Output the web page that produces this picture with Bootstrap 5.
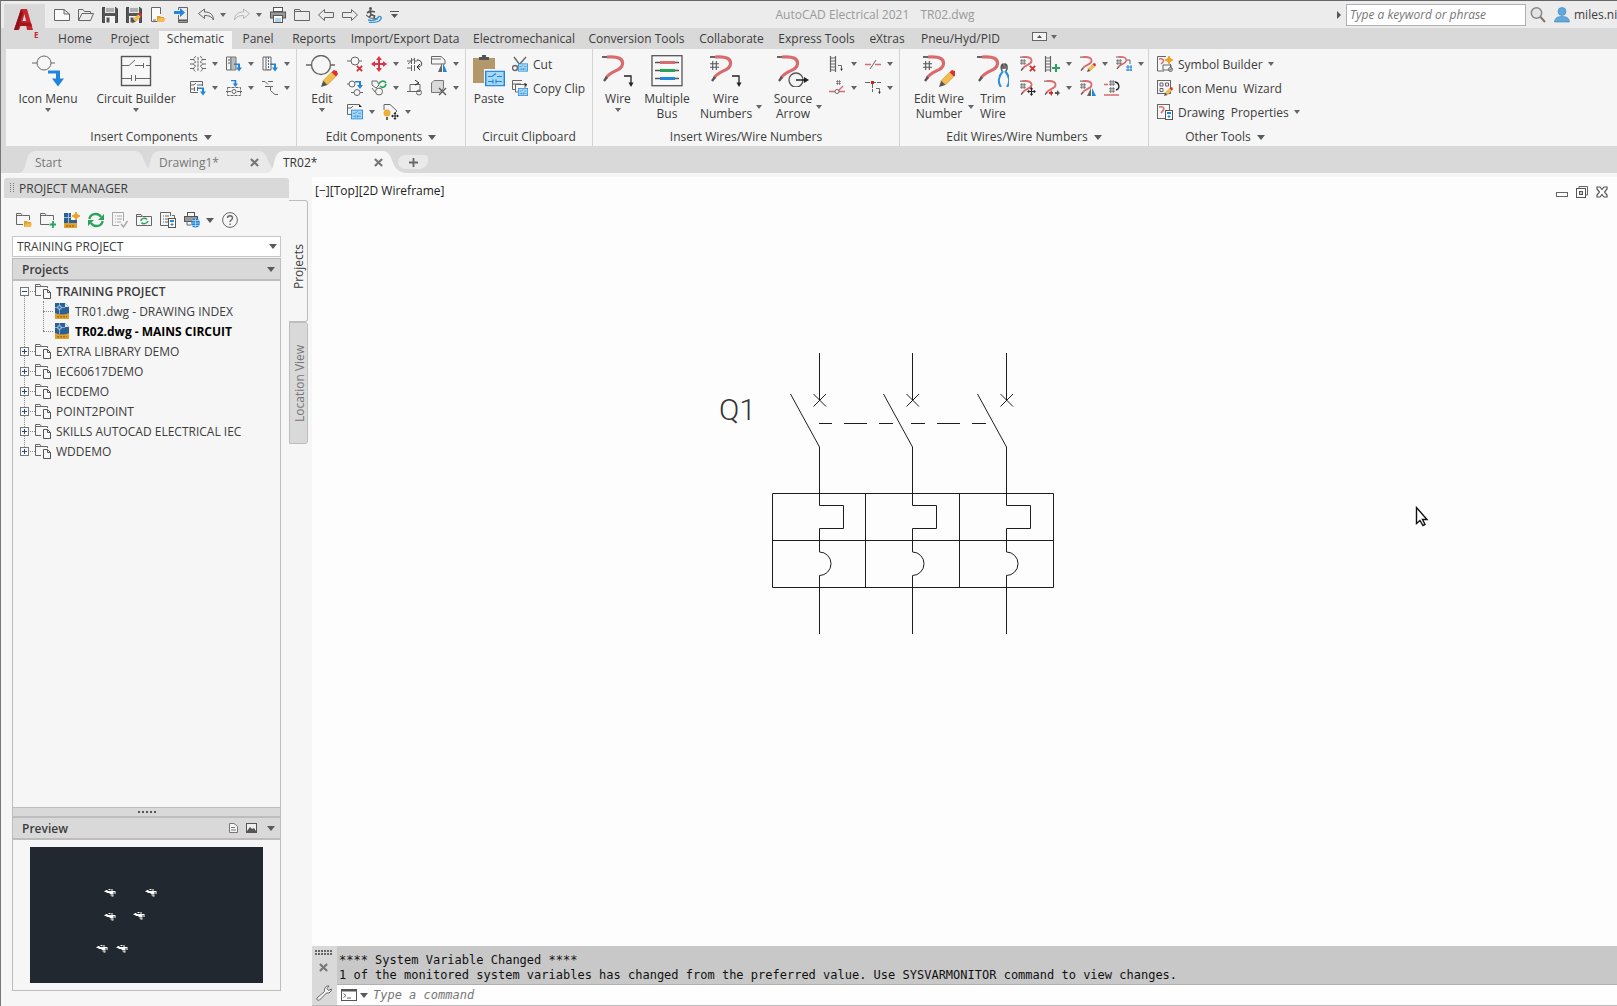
<!DOCTYPE html>
<html lang="en">
<head>
<meta charset="utf-8">
<meta name="viewport" content="width=device-width, initial-scale=1">
<title>AutoCAD Electrical 2021 - TR02.dwg</title>
<link href="https://cdn.jsdelivr.net/npm/bootstrap@5.3.0/dist/css/bootstrap.min.css" rel="stylesheet">
<style>
:root{--chrome:#d9d9d9;--panel:#f6f6f6;--edge:#bdbdbd;--ink:#444}
body{font-family:"Open Sans","Noto Sans",sans-serif;font-size:12px;line-height:15px;color:#3c3c3c;background:var(--panel)}
button{font:inherit;color:inherit;background:none;border:0;padding:0}
a{color:inherit;text-decoration:none}
svg{display:block;flex:none}
.app{border-top:1px solid #666;border-left:1px solid #777}
.i16{width:16px;height:16px}
.i32{width:32px;height:32px}
.ln{fill:none;stroke:#666}
.ln2{fill:none;stroke:#666;stroke-width:1.4}
.caret-s,.caret-m{width:0;height:0;border:3px solid transparent;border-top:4px solid #666;border-bottom:0;flex:none}
.caret-m{border-width:5px 4px 0;border-top-color:#5a5a5a}
/* title bar */
.titlebar{height:27px;background:#ececec}
.logo-btn{width:41px;height:43px;left:3px;top:3px;background:var(--chrome);z-index:3}
.qat{padding-left:53px}
.qat button{width:24px;height:24px;display:flex;align-items:center}
.qat .with-c{width:20px}
.qat .split-c{width:16px;padding-left:2px}
.doc-title{color:#999}
.search-in{width:180px;height:22px;border:1px solid #b0b0b0;background:#fff;font-style:italic;padding:0 3px;color:#666}
.search-in::placeholder,.cmd-in::placeholder{color:#777;opacity:1}
.user{width:63px}
/* ribbon tabs */
.rtabs{height:21px;background:var(--chrome);padding-left:48px}
.rtabs .nav-link{height:18px;padding:0 0 4px;display:flex;align-items:center;justify-content:center;border-radius:0;color:#3c3c3c;white-space:nowrap}
.rtabs .nav-link.active{background:var(--panel);color:#3c3c3c}
.t-52{width:52px}.t-58{width:58px}.t-60{width:60px}.t-73{width:73px}.t-81{width:81px}.t-89{width:89px}.t-95{width:95px}.t-109{width:109px}.t-116{width:116px}.t-122{width:122px}
/* ribbon */
.ribbon{height:97px;background:var(--panel);border-left:5px solid var(--chrome)}
.rpanel{border-right:1px solid #d4d4d4;display:flex;flex-direction:column;flex:none}
.rpanel:last-child{border:0}
.rbody{display:flex;height:79px;padding-top:3px}
.rtitle{height:18px;line-height:18px;display:flex;justify-content:center;align-items:center;gap:6px;white-space:nowrap}
.w-ins{width:291px}.w-edit{width:169px}.w-clip{width:127px}.w-wire{width:307px}.w-ewire{width:249px}.w-oth{width:152px}
.big{display:flex;flex-direction:column;align-items:center;flex:none;white-space:nowrap;padding-top:3px}
.big .lbl{margin-top:4px;line-height:15px;text-align:center;display:flex;align-items:center;gap:4px}
.big .caret-s{margin-top:2px}
.big .lbl .caret-s{margin:2px -10px 0 0}
.b42{width:42px}.b46{width:46px}.b48{width:48px}.b50{width:50px}.b62{width:62px}.b64{width:64px}.b84{width:84px}.b92{width:92px}
.smalls{display:flex;flex-direction:column}
.smalls>div{display:flex;height:24px}
.sm{width:24px;height:24px;display:flex;align-items:center}
.smc{width:36px;gap:6px}
.row-btn{height:24px;display:flex;align-items:center;gap:5px;white-space:pre}
/* file tabs */
.ftabs{height:27px;background:var(--chrome);padding:5px 0 0 17px}
.ftab{position:relative;width:123px;height:22px;margin-right:1px;padding:1px 11px 0 17px;color:#777;z-index:1;flex:none}
.ftab::before{content:"";position:absolute;left:0;top:0;width:142px;height:22px;background:#e9e9e9;clip-path:path('M0 22 C12 22 4 0 18 0 H116 C130 0 122 22 142 22 Z');z-index:-1}
.ftab.on{z-index:2;color:#333}
.ftab.on::before{background:var(--panel)}
.ftab svg{margin-right:-5px}
.plus{width:30px;height:14px;background:#e9e9e9;border-radius:8px 4px 10px 8px;margin:4px 0 0 8px;display:flex;align-items:center;justify-content:center}
/* palette */
.side{width:311px;padding:5px 4px 0 3px}
.pal{width:285px}
.pal-head{height:20px;background:var(--chrome);padding-left:6px;gap:5px;border-radius:3px 3px 0 0;margin-bottom:9px}
.pal-tools{height:26px;padding-left:12px;margin-bottom:3px}
.pal-tools button{width:24px;height:24px;display:flex;align-items:center}
.pal-tools .with-c{width:22px}
.pal-in{margin:0 8px 15px 8px}
.proj-pick{padding-bottom:1px}
.proj-sel{height:21px;border:1px solid #c6c6c6;border-radius:0;background:#fff;font-size:12px;line-height:15px;padding:0 4px;color:#3c3c3c;appearance:none;width:100%}
.sec{height:23px;background:var(--chrome);border:1px solid var(--edge);border-bottom:2px solid var(--edge);padding:0 5px 0 9px;font-weight:600}
.sec-mid{margin:0 10px 0 8px}
.tree{border:1px solid var(--edge);border-top:0}
.tree ul{list-style:none;margin:0;padding:0}
.tnode{height:20px;display:flex;align-items:center;padding-left:7px;white-space:nowrap}
.tnode .exp{width:9px;height:9px;margin-right:6px}
.tnode .i16{margin-right:5px}
.tsub .tnode{padding-left:41px}
.tsub{position:relative}
.tsub::before{content:"";position:absolute;left:30px;top:0;height:30px;border-left:1px dotted #888}
.tsub .tnode::before{content:"";position:absolute;left:30px;width:10px;border-top:1px dotted #888}
.troot{position:relative}
.troot::before{content:"";position:absolute;left:11px;top:14px;bottom:10px;border-left:1px dotted #888}
.troot>li>.tnode{position:relative}
.troot>li>.tnode::after{content:"";position:absolute;left:17px;top:10px;width:5px;border-top:1px dotted #888}
.split{height:9px;background:var(--chrome);border:1px solid var(--edge);border-top:0}
.prev-box{border:1px solid var(--edge);border-top:0;padding:7px 17px}
.prev-img{height:136px;background:#222830;width:100%}
.vtabs{padding-top:22px}
.vtab{width:19px;height:122px;writing-mode:vertical-rl;transform:rotate(180deg);border:1px solid var(--edge);text-align:center;line-height:19px;border-radius:3px 0 0 3px}
.vtab.on{border-right:0;border-bottom:1px solid var(--edge);background:var(--panel);padding-bottom:12px}
.vtab.off{background:var(--chrome);color:#777}
/* drawing */
.canvas{background:#fdfdfd;margin-top:4px}
.vp{left:3px;top:6px;color:#222}
.wctl{right:9px;top:9px;gap:8px}
.schem{width:100%;height:100%;position:absolute;left:0;top:0}
.schem .wire{fill:none;stroke:#1e1e1e;stroke-width:1}
/* command line */
.cmd{border-bottom:1px solid #bbb;height:60px}
.cmd-strip{width:23px;margin-right:2px;padding-top:4px}
.cmd-side{background:var(--chrome)}
.mono{font-family:"DejaVu Sans Mono","Liberation Mono",monospace;font-size:12px}
.hist{background:#c8c8c8;height:39px;border-bottom:1px solid #b0b0b0;padding:7px 2px 0;color:#111;white-space:pre;line-height:15px;overflow:hidden}
.cmd-line{background:#fefefe;height:20px;padding-left:4px;gap:3px}
.cmd-in{border:0;outline:0;background:none;font-style:italic;padding:0;margin-left:2px;flex:1}
</style>
</head>
<body>
<!-- shared icon shapes -->
<svg width="0" height="0" class="position-absolute" aria-hidden="true">
<defs>
<symbol id="pencil" viewBox="0 0 16 16"><path d="M2 10 10 2 14 6 6 14Z" fill="#f2bd4e" stroke="#c98f28" stroke-width=".6"/><path d="M10 2 12 0 15 1 16 4 14 6Z" fill="#d9303a"/><path d="M2 10 0 16 6 14Z" fill="#555"/></symbol>
<symbol id="wirered" viewBox="0 0 32 32"><path d="M0 2H9" stroke="#666" stroke-width="2"/><path d="M5 2C17 1 21 4 20.500 9 20 16 9 15 4 23" fill="none" stroke="#d96b6f" stroke-width="3.200"/><path d="M5 22 2 26" stroke="#555" stroke-width="2.400"/></symbol>
<symbol id="hash" viewBox="0 0 10 10"><path d="M3 0V10M7 0V10M0 3H10M0 7H10" fill="none" stroke="#555" stroke-width="1.200"/></symbol>
<symbol id="bluedn" viewBox="0 0 16 16"><path d="M0 0H12V8H16L10 16 4 8H8V3H0Z" fill="#1f86dc"/></symbol>
<symbol id="bend" viewBox="0 0 10 12"><path d="M0 1H7V9" fill="none" stroke="#222" stroke-width="1.300"/><path d="M4.500 7.500H9.500L7 12Z" fill="#222"/></symbol>
<symbol id="redx" viewBox="0 0 8 8"><path d="M1 1 7 7M7 1 1 7" stroke="#d32f2f" stroke-width="2"/></symbol>
<symbol id="move" viewBox="0 0 16 16"><path d="M8 2V14M2 8H14" stroke="currentColor" stroke-width="2"/><path d="M8 0 11 4H5ZM8 16 11 12H5ZM0 8 4 5V11ZM16 8 12 5V11Z" fill="currentColor"/></symbol>
<symbol id="bluebox" viewBox="0 0 20 16"><rect x=".7" y=".7" width="18.600" height="14.600" fill="#a9d8f5" stroke="#1f86dc" stroke-width="1.400"/><path d="M3 6H7L11 3M12 6H17M3 11H8M8 9V13M11 9V13M11 11H17" stroke="#1f86dc" fill="none" stroke-width="1.200"/></symbol>
<symbol id="ladder" viewBox="0 0 8 16"><path d="M1.500 0V16M6.500 0V16M1.500 2H6.500M1.500 5H6.500M1.500 8H6.500M1.500 11H6.500M1.500 14H6.500" fill="none" stroke="#666" stroke-width="1.200"/></symbol>
<symbol id="star" viewBox="0 0 8 8"><path d="M4 0 5 2.500 8 4 5 5.500 4 8 3 5.500 0 4 3 2.500Z" fill="#f0a020" stroke="#f0a020"/></symbol>
<symbol id="projf" viewBox="0 0 16 16"><path d="M6 12.500H.5V1.500H5L6.500 3.500H12.500V5M.5 3.500H6.500" class="ln"/><path d="M8.500 6.500H12.500L15.500 9.500V15.500H8.500ZM12.500 6.500V9.500H15.500" fill="#fafafa" stroke="#555"/></symbol>
<symbol id="dwg" viewBox="0 0 16 16"><path d="M1 0H11L15 4V13H1Z" fill="#2b6094"/><path d="M11 0V4H15Z" fill="#dfe8f0"/><path d="M5.500 0V11M1 4.500H11" stroke="#9cc4e2" stroke-width=".8"/><rect x="4" y="3" width="3" height="3" fill="#2b6094" stroke="#cfe2f1" stroke-width=".7"/><path d="M1 10Q8 13 15 10V16H1Z" fill="#e0a030"/><path d="M3 13.800H13" stroke="#a87010" stroke-width="1.600" stroke-dasharray="2 1"/></symbol>
<symbol id="plusb" viewBox="0 0 9 9"><rect x=".5" y=".5" width="8" height="8" fill="#fafafa" stroke="#777"/><path d="M2 4.500H7M4.500 2V7" stroke="#224a80"/></symbol>
<symbol id="minusb" viewBox="0 0 9 9"><rect x=".5" y=".5" width="8" height="8" fill="#fafafa" stroke="#777"/><path d="M2 4.500H7" stroke="#224a80"/></symbol>
<symbol id="floppy" viewBox="0 0 16 16"><path d="M.5.5H14L15.500 2V15.500H.5Z" fill="#555" stroke="#444"/><rect x="3" y="0" width="10" height="6" fill="#e8e8e8"/><path d="M4 2H12M4 4H12" stroke="#777"/><rect x="3" y="9" width="10" height="7" fill="#f4f4f4"/><rect x="4.500" y="10.500" width="3" height="5" fill="#555"/></symbol>
<symbol id="xclose" viewBox="0 0 8 8"><path d="M.8.8 7.200 7.200M7.200.8.8 7.200" stroke="#777" stroke-width="1.900"/></symbol>
<symbol id="calc" viewBox="0 0 8 10"><rect x=".5" y=".5" width="7" height="9" fill="#fff" stroke="#555"/><rect x="2" y="2" width="4" height="2" fill="#1f86dc"/><path d="M4 5V8M2.500 6.500H5.500" stroke="#1f86dc"/></symbol>
</defs>
</svg>

<div class="app vh-100 d-flex flex-column overflow-hidden position-relative">
<button class="logo-btn position-absolute" aria-label="Application menu">
<svg width="41" height="43" viewBox="0 0 41 43"><path d="M10 26 17 5H23L29 26H23L22 21H17L15 26Z" fill="#c8252d"/><path d="M18.500 17 20.500 10 22 17Z" fill="#d9d9d9"/><path d="M10 26 17 5 19 9 14 26Z" fill="#8d1219"/><path d="M15 18 27 19 28 22H15Z" fill="#a3151d"/><text x="30" y="34" font-size="8" font-weight="700" fill="#c8252d" font-family="Open Sans,sans-serif">E</text></svg>
</button>

<header class="titlebar d-flex align-items-center flex-shrink-0">
<div class="qat d-flex">
<button aria-label="New"><svg class="i16" viewBox="0 0 16 16"><path d="M.5 2.500H10L15.500 7V13.500H.5ZM10 2.500V7H15.500" fill="#fafafa" stroke="#666"/></svg></button>
<button aria-label="Open"><svg class="i16" viewBox="0 0 16 16"><path d="M.5 13.500V2.500H5L6.500 4.500H12.500V6.500M.5 13.500 4 6.500H15.500L12.500 13.500Z" class="ln"/></svg></button>
<button aria-label="Save"><svg class="i16"><use href="#floppy"/></svg></button>
<button aria-label="Save as"><svg class="i16" viewBox="0 0 16 16"><use href="#floppy"/><use href="#pencil" x="6" y="6" width="10" height="10"/></svg></button>
<button aria-label="Open from mobile"><svg class="i16" viewBox="0 0 16 16"><path d="M8 14.500H1.500V.5H10.500V7" fill="#fafafa" stroke="#666"/><path d="M3 13H6" stroke="#666"/><path d="M7 9H10L11 10H14V15H7Z" fill="#e0a030"/><path d="M7 15 9 11H15.500L14 15Z" fill="#f3bb50"/></svg></button>
<button aria-label="Save to mobile"><svg class="i16" viewBox="0 0 16 16"><path d="M4.500 3V.5H13.500V15.500H4.500V8" class="ln"/><path d="M5 13.500H13" stroke="#555" stroke-width="2"/><path d="M0 4H6V1L11 5.500 6 10V7H0Z" fill="#1f86dc"/></svg></button>
<button class="with-c" aria-label="Undo"><svg class="i16" viewBox="0 0 16 16"><path d="M.5 6.500 6.500 2V5C12 5 15 7 15.500 13 13.500 9.500 11 8.500 6.500 8.500V11.500Z" class="ln"/></svg></button>
<button class="split-c" aria-label="Undo list"><span class="caret-s"></span></button>
<button class="with-c" aria-label="Redo"><svg class="i16" viewBox="0 0 16 16" opacity=".4"><path d="M15.500 6.500 9.500 2V5C4 5 1 7 .5 13 2.500 9.500 5 8.500 9.500 8.500V11.500Z" class="ln"/></svg></button>
<button class="split-c" aria-label="Redo list"><span class="caret-s"></span></button>
<button aria-label="Plot"><svg class="i16" viewBox="0 0 16 16"><rect x="3.500" y=".5" width="9" height="4" fill="#fff" stroke="#555"/><rect x=".5" y="5" width="15" height="6" fill="#999" stroke="#555"/><rect x="3.500" y="8.500" width="9" height="7" fill="#fff" stroke="#555"/><path d="M5 12H11M5 14H11" stroke="#5aa9e0"/></svg></button>
<button aria-label="Project"><svg class="i16" viewBox="0 0 16 16"><path d="M.5 13.500V2.500H5.500L7 4.500H15.500V13.500ZM.5 4.500H7" class="ln"/></svg></button>
<button aria-label="Previous drawing"><svg class="i16" viewBox="0 0 16 16"><path d="M.5 8 6.500 2.500V5.500H15.500V10.500H6.500V13.500Z" class="ln"/></svg></button>
<button aria-label="Next drawing"><svg class="i16" viewBox="0 0 16 16"><path d="M15.500 8 9.500 2.500V5.500H.5V10.500H9.500V13.500Z" class="ln"/></svg></button>
<button aria-label="Surfer"><svg class="i16" viewBox="0 0 16 16"><circle cx="4.500" cy="1.500" r="1.500" fill="#555"/><path d="M1 6 4 4 9 5M4 4 5 7.500 8.500 9 8 11M5 8 3 10.500" fill="none" stroke="#555" stroke-width="1.700"/><path d="M0 8 4 11 12 12" fill="none" stroke="#666" stroke-width="1.200"/><path d="M2 13C8 14.500 11 12 13 9.500 16 9 16 12 13 14 10 16 6 15 3 15.500" fill="none" stroke="#2f8fd8" stroke-width="1.300"/></svg></button>
<button aria-label="Customize"><svg width="9" height="9" viewBox="0 0 9 9"><path d="M0 1.500H9" stroke="#555"/><path d="M1 4H8L4.500 8Z" fill="#555"/></svg></button>
</div>
<div class="doc-title flex-grow-1 text-center text-truncate"><span class="me-2">AutoCAD Electrical 2021</span> <span>TR02.dwg</span></div>
<div class="d-flex align-items-center flex-shrink-0 gap-1">
<svg width="6" height="8" viewBox="0 0 6 8"><path d="M1 0 5 4 1 8Z" fill="#555"/></svg>
<input class="search-in" type="text" placeholder="Type a keyword or phrase" aria-label="Search">
<button class="me-1" aria-label="Search"><svg class="i16" viewBox="0 0 16 16"><circle cx="6.500" cy="6" r="5.200" fill="#e4e4e4" stroke="#888" stroke-width="1.500"/><path d="M10.500 10 15 15" stroke="#8a7565" stroke-width="2"/></svg></button>
<button class="user d-flex align-items-center gap-1"><svg class="i16" viewBox="0 0 16 16"><circle cx="8" cy="4.500" r="4" fill="#62a8dc" stroke="#3b83ba" stroke-width=".6"/><path d="M.5 15C1 10.500 4 9.500 8 9.500S15 10.500 15.500 15Z" fill="#62a8dc" stroke="#3b83ba" stroke-width=".6"/></svg><span>miles.ni</span></button>
</div>
</header>

<nav class="rtabs nav d-flex flex-nowrap align-items-end flex-shrink-0">
<a class="nav-link t-52" href="#">Home</a><a class="nav-link t-58" href="#">Project</a><a class="nav-link active t-73" href="#">Schematic</a><a class="nav-link t-52" href="#">Panel</a><a class="nav-link t-60" href="#">Reports</a><a class="nav-link t-122" href="#">Import/Export Data</a><a class="nav-link t-116" href="#">Electromechanical</a><a class="nav-link t-109" href="#">Conversion Tools</a><a class="nav-link t-81" href="#">Collaborate</a><a class="nav-link t-89" href="#">Express Tools</a><a class="nav-link t-52" href="#">eXtras</a><a class="nav-link t-95" href="#">Pneu/Hyd/PID</a>
<button class="ms-4 d-flex align-items-center gap-1 mb-1 pb-1" aria-label="Minimize ribbon"><svg width="15" height="9" viewBox="0 0 15 9"><rect x=".5" y=".5" width="14" height="8" fill="#f4f4f4" stroke="#666"/><path d="M5 6H10L7.500 3Z" fill="#555"/></svg><span class="caret-s"></span></button>
</nav>

<div class="ribbon d-flex flex-shrink-0">
<section class="rpanel w-ins"><div class="rbody">
<button class="big b84"><svg class="i32" viewBox="0 0 32 32"><circle cx="12" cy="8" r="7" class="ln"/><path d="M0 8H5M19 8H23" class="ln"/><use href="#bluedn" x="16" y="15" width="16" height="17"/></svg><span class="lbl">Icon Menu</span><span class="caret-s"></span></button>
<button class="big b92"><svg class="i32" viewBox="0 0 32 32"><rect x="1.500" y="1.500" width="29" height="29" fill="#f7f7f7" stroke="#555" stroke-width="1.400"/><path d="M2 10.500H9L15 5M15 10.500H23M23.500 8V13M26 10.500H30M2 23.500H11M11.500 20V26M15.500 20V26M16 23.500H30" class="ln"/></svg><span class="lbl">Circuit Builder</span><span class="caret-s"></span></button>
<div class="smalls ms-1 ps-1">
<div><button class="sm smc" aria-label="Multiple insert"><svg class="i16" viewBox="0 0 16 16"><path d="M0 3.500H4M12 3.500H16M0 8H4M12 8H16M0 12.500H4M12 12.500H16" class="ln"/><path d="M6 .5C3 1 3 5 6 6 3 6.500 3 9.500 6 10 3 11 3 15 6 15.500M10 .5C13 1 13 5 10 6 13 6.500 13 9.500 10 10 13 11 13 15 10 15.500M8 1V15" class="ln" stroke-dasharray="3 .6"/></svg><span class="caret-s"></span></button><button class="sm smc" aria-label="Insert PLC"><svg class="i16" viewBox="0 0 16 16"><path d="M.5 1H5V14H.5Z" class="ln"/><path d="M5 1H10V14H5Z" fill="#bbb" stroke="#777"/><path d="M2 4H4M2 7H4" stroke="#555"/><use href="#bluedn" x="8" y="7" width="8" height="9"/></svg><span class="caret-s"></span></button><button class="sm smc" aria-label="Insert connector"><svg class="i16" viewBox="0 0 16 16"><path d="M1 1H9V14H1ZM4 1V14" class="ln"/><path d="M6.500 1V14" class="ln" stroke-dasharray="2 1"/><use href="#bluedn" x="8" y="7" width="8" height="9"/></svg><span class="caret-s"></span></button></div>
<div><button class="sm smc" aria-label="Insert circuit"><svg class="i16" viewBox="0 0 16 16"><path d="M8 12.500H.5V1.500H12.500V6M.5 5H4L6 3M7 5H12M.5 9H4M4.500 7V11M7.500 7V11" class="ln"/><use href="#bluedn" x="8" y="7" width="8" height="9"/></svg><span class="caret-s"></span></button><button class="sm smc" aria-label="Insert panel"><svg class="i16" viewBox="0 0 16 16"><use href="#bluedn" x="5" y="0" width="7" height="7"/><rect x="1.500" y="7.500" width="13" height="8" class="ln" stroke-dasharray="3 1"/><circle cx="8" cy="11.500" r="2" class="ln"/><path d="M0 11.500H5M11 11.500H16" class="ln"/></svg><span class="caret-s"></span></button><button class="sm smc" aria-label="Link"><svg class="i16" viewBox="0 0 16 16"><path d="M0 1.500H3L6 4.500M6 1.500H11M3 6.500H8.500V10.500L13 14.500H16M11 6.500H8.500" class="ln"/></svg><span class="caret-s"></span></button></div>
</div>
</div><div class="rtitle">Insert Components <span class="caret-m"></span></div></section>

<section class="rpanel w-edit"><div class="rbody">
<button class="big b42 ms-1"><svg class="i32" viewBox="0 0 32 32"><circle cx="15" cy="10" r="9.500" class="ln2"/><path d="M0 10H5M25 10H29" class="ln2"/><use href="#pencil" x="15" y="15" width="17" height="17"/></svg><span class="lbl">Edit</span><span class="caret-s"></span></button>
<div class="smalls ms-1">
<div><button class="sm" aria-label="Delete component"><svg class="i16" viewBox="0 0 16 16"><circle cx="8" cy="5" r="4" class="ln"/><path d="M0 5H4M12 5H15" class="ln"/><use href="#redx" x="9" y="9" width="7" height="7"/></svg></button><button class="sm smc" aria-label="Scoot"><svg class="i16 text-danger"><use href="#move"/></svg><span class="caret-s"></span></button><button class="sm" aria-label="Toggle"><svg class="i16" viewBox="0 0 16 16"><path d="M0 5H4M4.500 2V8M7.500 2V8M8 5H10M0 12H4M4.500 9V15M7.500 9V15M1 8 8 2" class="ln"/><path d="M10 4C16 4 16 11 11 11M13 8 10 11 13 14" fill="none" stroke="#222"/></svg></button><button class="sm smc" aria-label="Location"><svg class="i16" viewBox="0 0 16 16"><path d="M.5.5H10L14 4V8H.5ZM.5 3H10" class="ln"/><path d="M11 7V16H7Z" fill="#666"/><path d="M12 7V16H16Z" fill="#1f86dc"/></svg><span class="caret-s"></span></button></div>
<div><button class="sm" aria-label="Copy component"><svg class="i16" viewBox="0 0 16 16"><circle cx="5" cy="4" r="3" class="ln"/><circle cx="10" cy="12.500" r="3" class="ln"/><path d="M0 4H2M4 12.500H7M13 12.500H16" class="ln"/><use href="#bluedn" x="8" y="1" width="8" height="8"/></svg></button><button class="sm smc" aria-label="Update"><svg class="i16" viewBox="0 0 16 16"><path d="M1 1H6L8 5 5 8 1 5ZM1 8 4 12" class="ln"/><circle cx="8" cy="11.500" r="3.500" class="ln"/><path d="M8 4C9 1 13 0 15 3M15 4C14 8 11 8 9 6" fill="none" stroke="#2aa35a" stroke-width="1.600"/></svg><span class="caret-s"></span></button><button class="sm" aria-label="Swap"><svg class="i16" viewBox="0 0 16 16"><path d="M3 4.500H13V11.500H3ZM0 11.500H8" class="ln"/><circle cx="12" cy="12.500" r="2.500" class="ln"/><path d="M8 0 12 3 8 5" fill="none" stroke="#222"/></svg></button><button class="sm smc" aria-label="Attributes"><svg class="i16" viewBox="0 0 16 16"><path d="M.5 12.500V3L3 .5H12.500V8L9 12.500Z" fill="#d9d9d9" stroke="#777"/><path d="M8 8 15 15M15 8 8 15" stroke="#555" stroke-width="1.300"/></svg><span class="caret-s"></span></button></div>
<div><button class="sm smc" aria-label="Copy circuit"><svg class="i16" viewBox="0 0 16 16"><path d="M5 10.500H.5V.5H12M.5 4H4L6 2" class="ln"/><path d="M12 0 15 3H12Z" fill="#222"/><use href="#bluebox" x="4" y="5" width="12" height="11" preserveAspectRatio="none"/></svg><span class="caret-s"></span></button><button class="sm smc" aria-label="Move tag"><svg class="i16" viewBox="0 0 16 16"><path d="M1 6V.5H7L14 7 12 9" class="ln"/><circle cx="4" cy="9" r="3.500" fill="#f0ad3a"/><path d="M3 13H5V16H3Z" fill="#666"/><g color="#222"><use href="#move" x="8" y="8" width="8" height="8"/></g></svg><span class="caret-s"></span></button></div>
</div>
</div><div class="rtitle">Edit Components <span class="caret-m"></span></div></section>

<section class="rpanel w-clip"><div class="rbody">
<button class="big b46"><svg class="i32" viewBox="0 0 32 32"><rect x="0" y="3" width="22" height="25" fill="#b3986b"/><path d="M6 5V2H9V0H13V2H16V5Z" fill="#555"/><rect x="11" y="14" width="21" height="18" fill="#f5f5f5"/><use href="#bluebox" x="12" y="15.500" width="20" height="16"/></svg><span class="lbl">Paste</span></button>
<div class="smalls">
<button class="row-btn"><svg class="i16" viewBox="0 0 16 16"><path d="M2 1 8 9M14 1 6 10" class="ln2"/><circle cx="3" cy="12" r="2.500" class="ln2"/><use href="#bluebox" x="6" y="7" width="10" height="9" preserveAspectRatio="none"/></svg>Cut</button>
<button class="row-btn"><svg class="i16" viewBox="0 0 16 16"><path d="M4 9.500H.5V.5H10M.5 4H9M6 12H3.500V4.500H13V8" class="ln"/><path d="M12 3 15 4 14 7Z" fill="#222"/><use href="#bluebox" x="6" y="8" width="10" height="8" preserveAspectRatio="none"/></svg>Copy Clip</button>
</div>
</div><div class="rtitle">Circuit Clipboard</div></section>

<section class="rpanel w-wire"><div class="rbody">
<button class="big b50"><svg class="i32" viewBox="0 0 32 32"><use href="#wirered"/><use href="#bend" x="22" y="20" width="10" height="12"/></svg><span class="lbl">Wire</span><span class="caret-s"></span></button>
<button class="big b48"><svg class="i32" viewBox="0 0 32 32"><rect x="1" y=".7" width="30" height="30" fill="#f8f8f8" stroke="#555" stroke-width="1.300"/><path d="M4 7.500H28M4 15.500H28M4 23.500H28" stroke="#555" stroke-width="1.300"/><path d="M9 7.500H24" stroke="#d96b6f" stroke-width="3"/><path d="M9 15.500H24" stroke="#2aa35a" stroke-width="3"/><path d="M9 23.500H24" stroke="#1f86dc" stroke-width="3"/></svg><span class="lbl">Multiple<br>Bus</span></button>
<button class="big b62 ms-1"><svg class="i32" viewBox="0 0 32 32"><use href="#wirered"/><use href="#hash" x="0" y="6" width="9" height="9"/><use href="#bend" x="22" y="20" width="10" height="12"/></svg><span class="lbl">Wire<br>Numbers<span class="caret-s"></span></span></button>
<button class="big b64 ms-1"><svg class="i32" viewBox="0 0 32 32"><use href="#wirered"/><circle cx="19" cy="25" r="7" fill="#f5f5f5" stroke="#555" stroke-width="1.300"/><path d="M19 25H28" stroke="#222" stroke-width="1.500"/><path d="M27 22 32 25 27 28Z" fill="#222"/></svg><span class="lbl">Source<br>Arrow<span class="caret-s"></span></span></button>
<div class="smalls ms-1">
<div><button class="sm smc" aria-label="Insert ladder"><svg class="i16" viewBox="0 0 16 16"><use href="#ladder" width="8" height="16"/><use href="#bend" x="9" y="9" width="5" height="6"/></svg><span class="caret-s"></span></button><button class="sm smc" aria-label="Wire gap"><svg class="i16" viewBox="0 0 16 16"><path d="M0 8.500H16" stroke="#d96b6f" stroke-width="1.400" stroke-dasharray="6 4"/><path d="M5 13 11 4" class="ln"/></svg><span class="caret-s"></span></button></div>
<div><button class="sm smc" aria-label="Destination arrow"><svg class="i16" viewBox="0 0 16 16"><use href="#hash" x="7" y="0" width="5" height="5"/><path d="M0 11.500H16M9 11 14 6" stroke="#d96b6f" stroke-width="1.400"/><circle cx="8" cy="11.500" r="2" fill="#fff" stroke="#666"/></svg><span class="caret-s"></span></button><button class="sm smc" aria-label="Wire tee"><svg class="i16" viewBox="0 0 16 16"><path d="M0 2.500H16M7.500 3V12" class="ln" stroke-dasharray="5 1"/><rect x="6" y="1" width="3" height="3" fill="#c22"/><use href="#bend" x="11" y="8" width="5" height="6"/></svg><span class="caret-s"></span></button></div>
</div>
</div><div class="rtitle">Insert Wires/Wire Numbers</div></section>

<section class="rpanel w-ewire"><div class="rbody">
<button class="big b62 ms-2"><svg class="i32" viewBox="0 0 32 32"><use href="#wirered"/><use href="#hash" x="0" y="6" width="9" height="9"/><use href="#pencil" x="16" y="15" width="17" height="17"/></svg><span class="lbl">Edit Wire<br>Number<span class="caret-s"></span></span></button>
<button class="big b46"><svg class="i32" viewBox="0 0 32 32"><use href="#wirered"/><path d="M25 16C23 12 25 9 26 9V13H28V9C30 9 31 13 29 16" fill="none" stroke="#555" stroke-width="1.600"/><path d="M26 16C21 22 21 28 24 32M28 16C33 22 33 28 30 32" fill="none" stroke="#2f8fd8" stroke-width="2.200"/></svg><span class="lbl">Trim<br>Wire</span></button>
<div class="smalls ms-1">
<div><button class="sm" aria-label="Delete wire number"><svg class="i16" viewBox="0 0 16 16"><use href="#wirered" width="18" height="18"/><use href="#hash" y="3" width="6" height="6"/><use href="#redx" x="9" y="9" width="7" height="7"/></svg></button><button class="sm smc" aria-label="Add rung"><svg class="i16" viewBox="0 0 16 16"><use href="#ladder" width="8" height="16"/><path d="M12 8V16M8 12H16" stroke="#2aa35a" stroke-width="2"/></svg><span class="caret-s"></span></button><button class="sm smc" aria-label="Edit wire type"><svg class="i16" viewBox="0 0 16 16"><use href="#wirered" width="18" height="18"/><use href="#pencil" x="7" y="7" width="9" height="9"/></svg><span class="caret-s"></span></button><button class="sm smc" aria-label="Copy wire number"><svg class="i16" viewBox="0 0 16 16"><use href="#wirered" width="16" height="16"/><use href="#hash" y="3" width="6" height="6"/><path d="M11 4H14V8" class="ln"/><path d="M12 9V15M15 9V15M10 11H16M10 14H16" stroke="#1f86dc" fill="none"/></svg><span class="caret-s"></span></button></div>
<div><button class="sm" aria-label="Move wire number"><svg class="i16" viewBox="0 0 16 16"><use href="#wirered" width="18" height="18"/><use href="#hash" y="3" width="6" height="6"/><g color="#222"><use href="#move" x="7" y="7" width="9" height="9"/></g></svg></button><button class="sm smc" aria-label="Stretch wire"><svg class="i16" viewBox="0 0 16 16"><use href="#wirered" width="18" height="18"/><path d="M5 13H9" stroke="#d32f2f" stroke-width="2"/><path d="M5 13 8 10V16Z" fill="#d32f2f"/><path d="M11 13H14" stroke="#555" stroke-width="2"/><path d="M16 13 13 10V16Z" fill="#555"/></svg><span class="caret-s"></span></button><button class="sm" aria-label="Flip wire number"><svg class="i16" viewBox="0 0 16 16"><use href="#wirered" width="18" height="18"/><use href="#hash" y="3" width="6" height="6"/><path d="M11 8V16H7Z" fill="#666"/><path d="M12 8V16H16Z" fill="#1f86dc"/></svg></button><button class="sm" aria-label="Toggle in-line"><svg class="i16" viewBox="0 0 16 16"><path d="M0 4.500H4M0 15H15" stroke="#d96b6f" stroke-width="1.400"/><use href="#hash" x="5" y="0" width="6" height="6"/><use href="#hash" x="5" y="7" width="6" height="6"/><path d="M11 2C16 3 16 9 12 10" fill="none" stroke="#222" stroke-width="1.300"/></svg></button></div>
</div>
</div><div class="rtitle">Edit Wires/Wire Numbers <span class="caret-m"></span></div></section>

<section class="rpanel w-oth"><div class="rbody">
<div class="smalls ps-2">
<button class="row-btn"><svg class="i16" viewBox="0 0 16 16"><path d="M7 15H.5V.5H9M13.500 8V11" class="ln"/><path d="M2 3C7 2 8 5 4 8" fill="none" stroke="#d96b6f" stroke-width="1.500"/><path d="M6 9H14V14H6Z" class="ln"/><circle cx="13.500" cy="13.500" r="2" class="ln"/><use href="#star" x="8" y="0" width="8" height="8"/></svg>Symbol Builder<span class="caret-s"></span></button>
<button class="row-btn"><svg class="i16" viewBox="0 0 16 16"><rect x=".5" y=".5" width="13" height="13" class="ln"/><path d="M3 3H6V6H3ZM8.500 3H11.500V6H8.500ZM3 8.500H6V11.500H3Z" class="ln"/><use href="#pencil" x="7" y="7" width="9" height="9"/></svg>Icon Menu  Wizard</button>
<button class="row-btn"><svg class="i16" viewBox="0 0 16 16"><rect x=".5" y=".5" width="12" height="14" class="ln"/><path d="M2 3C8 2 8 5 4 9" fill="none" stroke="#d96b6f" stroke-width="1.600"/><use href="#calc" x="8" y="6" width="8" height="10"/></svg>Drawing  Properties<span class="caret-s"></span></button>
</div>
</div><div class="rtitle">Other Tools <span class="caret-m"></span></div></section>
</div>

<div class="ftabs d-flex flex-shrink-0">
<a class="ftab d-flex align-items-center" href="#">Start</a>
<a class="ftab d-flex align-items-center justify-content-between" href="#">Drawing1*<svg width="9" height="9"><use href="#xclose"/></svg></a>
<a class="ftab on d-flex align-items-center justify-content-between" href="#">TR02*<svg width="9" height="9"><use href="#xclose"/></svg></a>
<button class="plus" aria-label="New drawing"><svg width="9" height="9" viewBox="0 0 9 9"><path d="M4.500 0V9M0 4.500H9" stroke="#666" stroke-width="1.800"/></svg></button>
</div>

<main class="d-flex flex-grow-1 overflow-hidden">
<aside class="side d-flex flex-shrink-0">
<div class="pal d-flex flex-column">
<div class="pal-head d-flex align-items-center"><svg width="4" height="10" viewBox="0 0 4 10"><path d="M.5 0V10M3.500 0V10" stroke="#777" stroke-dasharray="1 1"/></svg>PROJECT MANAGER</div>
<div class="pal-tools d-flex align-items-center">
<button aria-label="Open project"><svg class="i16" viewBox="0 0 16 16"><path d="M7 12.500H.5V1.500H5L6.500 3.500H13.500V8M.5 3.500H6" class="ln"/><path d="M8 9H11L12 10H15V15H8Z" fill="#e0a030"/><path d="M8 15 10 11.500H16L15 15Z" fill="#f3bb50"/></svg></button>
<button aria-label="New project"><svg class="i16" viewBox="0 0 16 16"><path d="M9 12.500H.5V1.500H5L6.500 3.500H13.500V8M.5 3.500H6" class="ln"/><path d="M13 9V16M9.500 12.500H16" stroke="#2aa35a" stroke-width="1.800"/></svg></button>
<button aria-label="New drawing"><svg class="i16" viewBox="0 0 16 16"><path d="M0 1H7V8H13V11H0Z" fill="#2b6094"/><path d="M4.500 1V11M0 5.500H8" stroke="#b8d4ea" stroke-width=".8"/><path d="M0 11H13V16H0Z" fill="#e0a030"/><path d="M2 14H11" stroke="#a87010" stroke-width="1.600" stroke-dasharray="2 1"/><use href="#star" x="8" y="0" width="8" height="8"/></svg></button>
<button aria-label="Refresh"><svg class="i16" viewBox="0 0 16 16"><path d="M1.500 7C2 1.500 10 0 13 5M14.500 9C14 14.500 6 16 3 11" fill="none" stroke="#2aa35a" stroke-width="2.400"/><path d="M16 2V8H10ZM0 14V8H6Z" fill="#2aa35a"/></svg></button>
<button aria-label="Task list"><svg class="i16" viewBox="0 0 16 16" opacity=".55"><path d="M7 13.500H.5V.5H11.500V9M3 4H4M5 4H10M3 7H4M5 7H10M3 10H4M5 10H9" class="ln"/><path d="M9 12 11.500 15 15.500 9" class="ln2"/></svg></button>
<button aria-label="Update project"><svg class="i16" viewBox="0 0 16 16"><path d="M.5 13.500V2.500H5L6.500 4.500H15.500V13.500ZM.5 4.500H6" class="ln"/><path d="M5 9C5 6 9 5.500 11 7.500M12 9C11 12 7 12.500 5.500 10.500" fill="none" stroke="#2aa35a" stroke-width="1.500"/></svg></button>
<button aria-label="Drawing list"><svg class="i16" viewBox="0 0 16 16"><path d="M8 13.500H.5V.5H10.500V4M3 4H4M5 4H9M3 7H4M5 7H8M3 10H4M5 10H8" class="ln"/><path d="M12 3.500H14.500V7" class="ln"/><use href="#calc" x="8" y="6" width="8" height="10"/></svg></button>
<button class="with-c" aria-label="Plot and publish"><svg class="i16" viewBox="0 0 16 16"><rect x="3.500" y=".5" width="7" height="4" fill="#fff" stroke="#555"/><rect x=".5" y="4.500" width="13" height="5" fill="#999" stroke="#555"/><path d="M3 9V13H7" class="ln"/><circle cx="11.500" cy="11" r="4.500" fill="#1f86dc"/><path d="M7 11H16M11.500 6.500V15.500M8 8.500H15M8 13.500H15" stroke="#cfe6f8" stroke-width=".7"/></svg></button>
<span class="caret-m me-2"></span>
<button aria-label="Help"><svg class="i16" viewBox="0 0 16 16"><circle cx="8" cy="8" r="7.400" class="ln"/><path d="M5.500 6C5.500 3 10.500 3 10.500 6 10.500 8 8 8 8 10M8 11.500V13" class="ln2"/></svg></button>
</div>
<div class="pal-in d-flex flex-column flex-grow-1">
<div class="proj-pick position-relative">
<select class="proj-sel d-block" aria-label="Project"><option>TRAINING PROJECT</option></select>
<span class="caret-m position-absolute end-0 top-0 mt-2 me-1"></span>
</div>
<div class="sec d-flex align-items-center justify-content-between flex-shrink-0">Projects<span class="caret-m"></span></div>
<div class="tree flex-grow-1">
<ul class="troot">
<li><div class="tnode fw-semibold"><svg class="exp"><use href="#minusb"/></svg><svg class="i16"><use href="#projf"/></svg>TRAINING PROJECT</div>
<ul class="tsub"><li class="tnode"><svg class="i16"><use href="#dwg"/></svg>TR01.dwg - DRAWING INDEX</li><li class="tnode fw-bold text-black"><svg class="i16"><use href="#dwg"/></svg>TR02.dwg - MAINS CIRCUIT</li></ul></li>
<li><div class="tnode"><svg class="exp"><use href="#plusb"/></svg><svg class="i16"><use href="#projf"/></svg>EXTRA LIBRARY DEMO</div></li>
<li><div class="tnode"><svg class="exp"><use href="#plusb"/></svg><svg class="i16"><use href="#projf"/></svg>IEC60617DEMO</div></li>
<li><div class="tnode"><svg class="exp"><use href="#plusb"/></svg><svg class="i16"><use href="#projf"/></svg>IECDEMO</div></li>
<li><div class="tnode"><svg class="exp"><use href="#plusb"/></svg><svg class="i16"><use href="#projf"/></svg>POINT2POINT</div></li>
<li><div class="tnode"><svg class="exp"><use href="#plusb"/></svg><svg class="i16"><use href="#projf"/></svg>SKILLS AUTOCAD ELECTRICAL IEC</div></li>
<li><div class="tnode"><svg class="exp"><use href="#plusb"/></svg><svg class="i16"><use href="#projf"/></svg>WDDEMO</div></li>
</ul>
</div>
<div class="split d-flex justify-content-center align-items-center"><svg width="18" height="2"><path d="M0 1H18" stroke="#555" stroke-width="2" stroke-dasharray="2 2"/></svg></div>
<div class="sec d-flex align-items-center flex-shrink-0"><span class="flex-grow-1">Preview</span>
<button aria-label="Details"><svg width="9" height="10" viewBox="0 0 9 10"><path d="M.5.5H5L8.500 3.500V9.500H.5ZM2 4.500H6M2 7H7" fill="#f4f4f4" stroke="#777"/></svg></button>
<button class="sec-mid" aria-label="Image"><svg width="11" height="10" viewBox="0 0 11 10"><rect x=".5" y=".5" width="10" height="9" fill="#eee" stroke="#555"/><path d="M1 8 4 4 6 6 8 5 10 8V9H1Z" fill="#555"/></svg></button>
<span class="caret-m"></span></div>
<div class="prev-box"><svg class="prev-img" viewBox="0 0 232 136"><defs><path id="cmp" d="M0 2.500H11M1 1.500H3M4 .5H6M2 3.500H9M7.500 0V5M5 4.500H9M6 6H9M10.500 3V5M7 7H9" stroke="#fff" fill="none"/></defs><use href="#cmp" x="74" y="42"/><use href="#cmp" x="115" y="42"/><use href="#cmp" x="74" y="66"/><use href="#cmp" x="103" y="65"/><use href="#cmp" x="66" y="98"/><use href="#cmp" x="86" y="98"/></svg></div>
</div>
</div>
<div class="vtabs flex-shrink-0">
<button class="vtab on d-block">Projects</button>
<button class="vtab off d-block">Location View</button>
</div>
</aside>

<div class="d-flex flex-column flex-grow-1 overflow-hidden">
<div class="canvas position-relative flex-grow-1 overflow-hidden">
<svg class="schem">
<defs>
<g id="pole" class="wire">
<path d="M.5 0V47M-5.500 41 7 53.500M7 41-5.500 53.500" />
<path d="M-28.500 41 .5 94V152.500H24.500V175.500H.5V199A11.500 11.700 0 0 1 .5 222.500V281"/>
</g>
</defs>
<g transform="translate(-312 -177)">
<use href="#pole" x="819" y="353"/><use href="#pole" x="912" y="353"/><use href="#pole" x="1006" y="353"/>
<path class="wire" d="M772.500 493.500H1053.500V587.500H772.500ZM772.500 540.500H1053.500M959.500 493.500V587.500M865.500 493.500V587.500"/>
<path class="wire" d="M819 423.500H832M844 423.500H867M879 423.500H893M911 423.500H925M937 423.500H960M972 423.500H986"/>
<text x="719" y="420" font-size="30" font-weight="300" font-family="Roboto,sans-serif" fill="#333">Q1</text>
<path d="M1416.500 507.500V523.500L1420 520.500 1423 525.500 1425 524.500 1422.500 519.500H1427Z" fill="#fff" stroke="#111" stroke-width="1.400"/>
</g>
</svg>
<div class="vp position-absolute">[−][Top][2D Wireframe]</div>
<div class="wctl position-absolute d-flex align-items-center">
<button aria-label="Minimize"><svg width="12" height="12" viewBox="0 0 12 12"><rect x=".5" y="6.500" width="11" height="4" fill="#fff" stroke="#666"/></svg></button>
<button aria-label="Restore"><svg width="12" height="12" viewBox="0 0 12 12"><path d="M3 2.500V.5H11.500V9H9.500" class="ln"/><rect x=".5" y="2.500" width="9" height="9" fill="#fff" stroke="#555"/><rect x="3.500" y="5.500" width="3" height="3" fill="#ccc" stroke="#555"/></svg></button>
<button aria-label="Close"><svg width="12" height="12" viewBox="0 0 12 12"><path d="M1 1H4L6 3.500 8 1H11V3L8.500 6 11 9V11H8L6 8.500 4 11H1V9L3.500 6 1 3Z" fill="#fff" stroke="#555" stroke-width="1.200"/></svg></button>
</div>
</div>
<div class="cmd d-flex flex-shrink-0">
<div class="cmd-side d-flex flex-shrink-0"><div class="cmd-strip d-flex flex-column align-items-center">
<svg width="17" height="5"><path d="M0 1H17M0 4H17" stroke="#666" stroke-width="2" stroke-dasharray="2 1"/></svg>
<button class="mt-2" aria-label="Close command line"><svg width="9" height="9"><use href="#xclose"/></svg></button>
<button class="mt-auto mb-1" aria-label="Settings"><svg class="i16" viewBox="0 0 16 16"><path d="M1 13 8.500 6.500C8 3 10 .5 13 1L11 3.500 12.500 5.500 15.500 4C15.500 7 13 8.500 10.500 8L3.500 15C2 16 0 14.500 1 13Z" fill="#f4f4f4" stroke="#666"/></svg></button>
</div></div>
<div class="flex-grow-1 d-flex flex-column overflow-hidden">
<div class="hist mono">**** System Variable Changed ****
1 of the monitored system variables has changed from the preferred value. Use SYSVARMONITOR command to view changes.</div>
<div class="cmd-line d-flex align-items-center"><svg width="16" height="12" viewBox="0 0 16 12"><rect x=".5" y=".5" width="15" height="11" fill="#fff" stroke="#555"/><path d="M0 1.500H16" stroke="#555" stroke-width="2"/><path d="M2.500 4.500 5 6.500 2.500 8.500M6 9H10" class="ln"/></svg><span class="caret-m"></span><input class="cmd-in mono" type="text" placeholder="Type a command" aria-label="Command"></div>
</div>
</div>
</div>
</main>
</div>
<script src="https://cdn.jsdelivr.net/npm/bootstrap@5.3.0/dist/js/bootstrap.bundle.min.js"></script>
</body>
</html>
